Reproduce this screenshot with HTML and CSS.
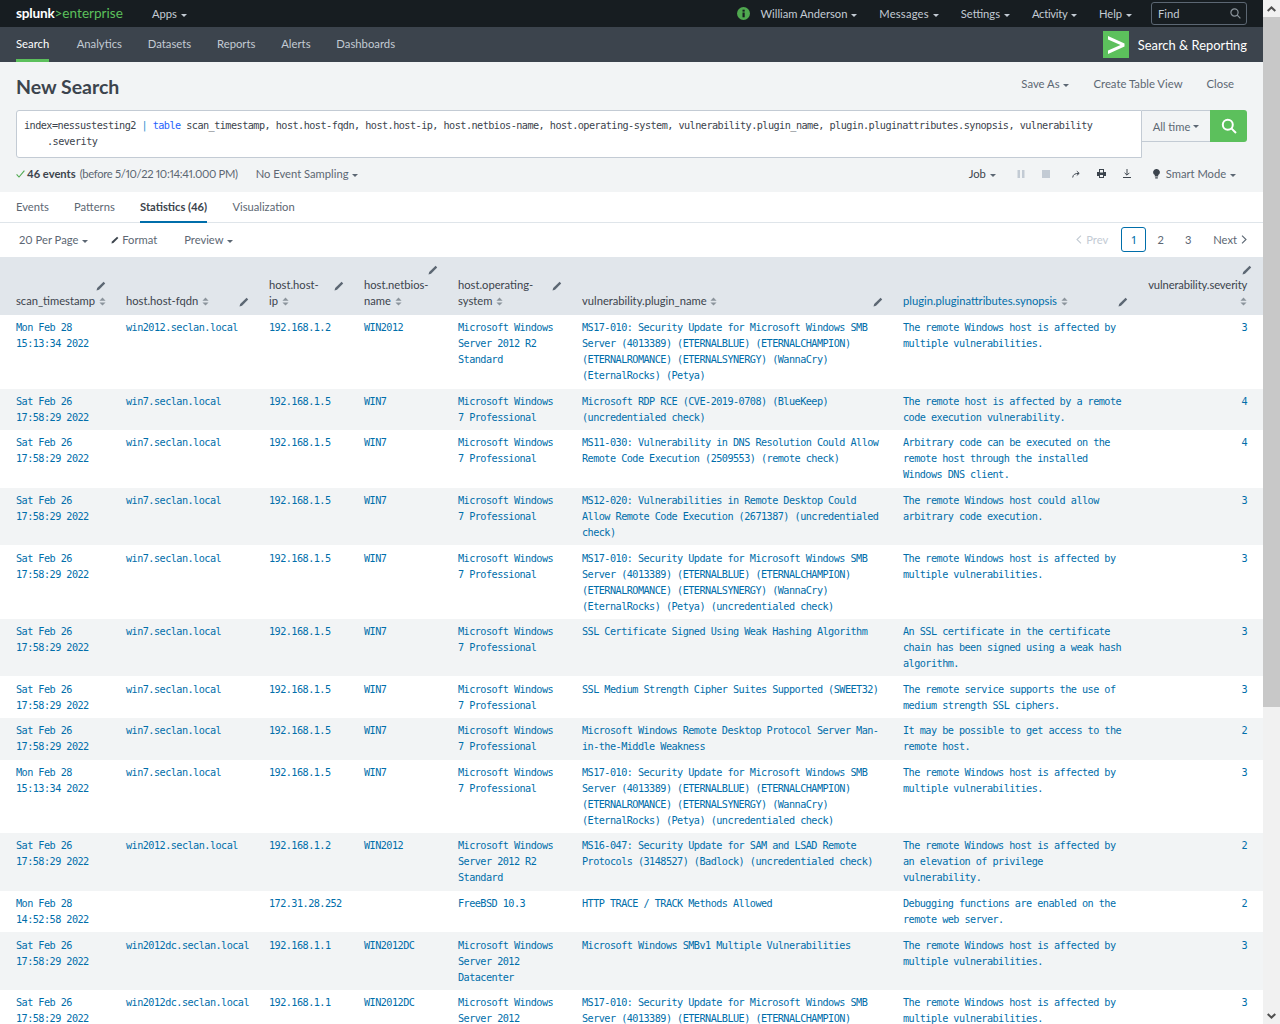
FILE: index.html
```html
<!DOCTYPE html>
<html lang="en">
<head>
<meta charset="utf-8">
<title>New Search</title>
<link rel="stylesheet" href="styles.css">
</head>
<body>
<svg class="defs" width="0" height="0">
  <symbol id="pencil" viewBox="0 0 10 10"><path d="M0.5 9.5 L1.2 7 L7.6 0.8 L9.2 2.4 L3 8.8 Z" fill="currentColor"/></symbol>
  <symbol id="sort" viewBox="0 0 8 10"><path d="M4 0.5 L7.5 4 H0.5 Z M4 9.5 L0.5 6 H7.5 Z" fill="currentColor"/></symbol>
</svg>
<div class="window">
<div class="page">
  <header class="topbar">
    <div class="logo"><span class="logo-white">splunk</span><span class="logo-green">&gt;enterprise</span></div>
    <div class="top-item apps">Apps <i class="caret"></i></div>
    <div class="spacer"></div>
    <svg class="info" width="13" height="13" viewBox="0 0 13 13"><circle cx="6.5" cy="6.5" r="6.5" fill="#4fa84f"/><rect x="5.5" y="5.5" width="2.2" height="4.8" fill="#171d21"/><rect x="5.5" y="2.7" width="2.2" height="1.9" fill="#171d21"/></svg>
    <div class="top-item user">William Anderson <i class="caret"></i></div>
    <div class="top-item wide">Messages <i class="caret"></i></div>
    <div class="top-item">Settings <i class="caret"></i></div>
    <div class="top-item tight">Activity <i class="caret"></i></div>
    <div class="top-item">Help <i class="caret"></i></div>
    <div class="find"><span>Find</span>
      <svg width="11" height="11" viewBox="0 0 11 11" fill="none" stroke="#8b949c" stroke-width="1.2"><circle cx="4.5" cy="4.5" r="3.6"/><path d="M7.2 7.2 L10.4 10.4"/></svg>
    </div>
  </header>
  <nav class="appbar">
    <a class="nav active">Search</a>
    <a class="nav">Analytics</a>
    <a class="nav">Datasets</a>
    <a class="nav">Reports</a>
    <a class="nav">Alerts</a>
    <a class="nav">Dashboards</a>
    <div class="spacer"></div>
    <svg class="applogo" width="26" height="27" viewBox="0 0 26 27"><rect width="26" height="27" fill="#5cc05c"/><path d="M5 5 L21.5 12.5 V15.5 L5 23 V19.4 L17.5 14 L5 8.6 Z" fill="#fff"/></svg>
    <div class="appname">Search &amp; Reporting</div>
  </nav>
  <section class="titlebar">
    <h1>New Search</h1>
    <div class="actions">
      <span class="act">Save As <i class="caret dark"></i></span>
      <span class="act">Create Table View</span>
      <span class="act">Close</span>
    </div>
  </section>
  <section class="searchbar">
    <div class="query"><span>index=nessustesting2 <b class="pipe">|</b> <b class="cmd">table</b> scan_timestamp, host.host-fqdn, host.host-ip, host.netbios-name, host.operating-system, vulnerability.plugin_name, plugin.pluginattributes.synopsis, vulnerability</span><span class="indent">.severity</span></div>
    <div class="timepick">All time <i class="caret dark"></i></div>
    <div class="go"><svg width="16" height="16" viewBox="0 0 16 16" fill="none" stroke="#fff" stroke-width="2"><circle cx="6.8" cy="6.8" r="5"/><path d="M10.4 10.4 L15 15"/></svg></div>
  </section>
  <section class="status">
    <svg class="check" width="9" height="8" viewBox="0 0 9 8" fill="none" stroke="#4fa84f" stroke-width="1.1"><path d="M0.6 4.4 L3 7 L8.4 0.6"/></svg>
    <strong>46 events</strong><span class="before">(before 5/10/22 10:14:41.000 PM)</span>
    <span class="sampling">No Event Sampling <i class="caret dark"></i></span>
    <div class="spacer"></div>
    <span class="job">Job <i class="caret dark"></i></span>
    <svg class="ic pause" width="8" height="8" viewBox="0 0 8 8"><path d="M0.5 0 H3 V8 H0.5 Z M5 0 H7.5 V8 H5 Z" fill="#c3cbd4"/></svg>
    <svg class="ic stop" width="8" height="8" viewBox="0 0 8 8"><rect width="8" height="8" fill="#c3cbd4"/></svg>
    <svg class="ic share" width="8" height="8" viewBox="0 0 8 8" fill="none" stroke="#3c444d" stroke-width="1"><path d="M0.7 7.5 C1 4.5 3 3.4 6.8 3.4"/><path d="M4.8 1.2 L7.2 3.4 L4.8 5.4"/></svg>
    <svg class="ic print" width="9" height="9" viewBox="0 0 9 9"><path d="M2 0 H7 V3 H9 V7 H7 V9 H2 V7 H0 V3 H2 Z M3 1 V3.4 H6 V1 Z M3 6 V8 H6 V6 Z" fill="#3c444d" fill-rule="evenodd"/></svg>
    <svg class="ic export" width="8" height="9" viewBox="0 0 8 9" fill="none" stroke="#3c444d" stroke-width="1"><path d="M4 0 V6 M1.6 3.8 L4 6.2 L6.4 3.8 M0 8.5 H8"/></svg>
    <svg class="bulb" width="7" height="10" viewBox="0 0 7 10"><path d="M3.5 0 A3.2 3.2 0 0 1 5.2 6 V7.4 H1.8 V6 A3.2 3.2 0 0 1 3.5 0 Z M2.2 8.2 H4.8 V9.6 H2.2 Z" fill="#3c444d"/></svg>
    <span class="mode">Smart Mode <i class="caret dark"></i></span>
  </section>
  <main class="results">
    <div class="tabs">
      <a class="tab">Events</a>
      <a class="tab">Patterns</a>
      <a class="tab current">Statistics (46)</a>
      <a class="tab">Visualization</a>
    </div>
    <div class="controls">
      <span class="perpage">20 Per Page <i class="caret dark"></i></span>
      <span class="format"><svg class="pen-sm" width="8" height="8"><use href="#pencil"/></svg>Format</span>
      <span class="preview">Preview <i class="caret dark"></i></span>
      <div class="spacer"></div>
      <span class="prev"><svg width="6" height="9" viewBox="0 0 6 9" fill="none" stroke="currentColor" stroke-width="1.1"><path d="M5 0.6 L1 4.5 L5 8.4"/></svg>Prev</span>
      <span class="pg cur">1</span>
      <span class="pg">2</span>
      <span class="pg">3</span>
      <span class="next">Next<svg width="6" height="9" viewBox="0 0 6 9" fill="none" stroke="currentColor" stroke-width="1.1"><path d="M1 0.6 L5 4.5 L1 8.4"/></svg></span>
    </div>
    <table class="grid">
      <colgroup><col class="c1"><col class="c2"><col class="c3"><col class="c4"><col class="c5"><col class="c6"><col class="c7"><col class="c8"></colgroup>
      <thead>
        <tr>
          <th class="first"><svg class="pen"><use href="#pencil"/></svg><span class="nb">scan_timestamp <svg class="sort"><use href="#sort"/></svg></span></th>
          <th><svg class="pen"><use href="#pencil"/></svg>host.host-fqdn <svg class="sort"><use href="#sort"/></svg></th>
          <th><svg class="pen pen-wide"><use href="#pencil"/></svg>host.host-ip <svg class="sort"><use href="#sort"/></svg></th>
          <th><svg class="pen pen-wide"><use href="#pencil"/></svg>host.netbios-name <svg class="sort"><use href="#sort"/></svg></th>
          <th><svg class="pen"><use href="#pencil"/></svg>host.operating-system <svg class="sort"><use href="#sort"/></svg></th>
          <th><svg class="pen"><use href="#pencil"/></svg>vulnerability.plugin_name <svg class="sort"><use href="#sort"/></svg></th>
          <th class="sorted"><svg class="pen"><use href="#pencil"/></svg>plugin.pluginattributes.synopsis <svg class="sort"><use href="#sort"/></svg></th>
          <th class="last"><svg class="pen"><use href="#pencil"/></svg><span class="rlabel">vulnerability.severity <svg class="sort"><use href="#sort"/></svg></span></th>
        </tr>
      </thead>
      <tbody>
        <tr><td class="first">Mon Feb 28 15:13:34 2022</td><td>win2012.seclan.local</td><td>192.168.1.2</td><td>WIN2012</td><td>Microsoft Windows Server 2012 R2 Standard</td><td>MS17-010: Security Update for Microsoft Windows SMB Server (4013389) (ETERNALBLUE) (ETERNALCHAMPION) (ETERNALROMANCE) (ETERNALSYNERGY) (WannaCry) (EternalRocks) (Petya)</td><td class="syn">The remote Windows host is affected by multiple vulnerabilities.</td><td class="last">3</td></tr>
        <tr><td class="first">Sat Feb 26 17:58:29 2022</td><td>win7.seclan.local</td><td>192.168.1.5</td><td>WIN7</td><td>Microsoft Windows 7 Professional</td><td>Microsoft RDP RCE (CVE-2019-0708) (BlueKeep) (uncredentialed check)</td><td class="syn">The remote host is affected by a remote code execution vulnerability.</td><td class="last">4</td></tr>
        <tr><td class="first">Sat Feb 26 17:58:29 2022</td><td>win7.seclan.local</td><td>192.168.1.5</td><td>WIN7</td><td>Microsoft Windows 7 Professional</td><td>MS11-030: Vulnerability in DNS Resolution Could Allow Remote Code Execution (2509553) (remote check)</td><td class="syn">Arbitrary code can be executed on the remote host through the installed Windows DNS client.</td><td class="last">4</td></tr>
        <tr><td class="first">Sat Feb 26 17:58:29 2022</td><td>win7.seclan.local</td><td>192.168.1.5</td><td>WIN7</td><td>Microsoft Windows 7 Professional</td><td>MS12-020: Vulnerabilities in Remote Desktop Could Allow Remote Code Execution (2671387) (uncredentialed check)</td><td class="syn">The remote Windows host could allow arbitrary code execution.</td><td class="last">3</td></tr>
        <tr><td class="first">Sat Feb 26 17:58:29 2022</td><td>win7.seclan.local</td><td>192.168.1.5</td><td>WIN7</td><td>Microsoft Windows 7 Professional</td><td>MS17-010: Security Update for Microsoft Windows SMB Server (4013389) (ETERNALBLUE) (ETERNALCHAMPION) (ETERNALROMANCE) (ETERNALSYNERGY) (WannaCry) (EternalRocks) (Petya) (uncredentialed check)</td><td class="syn">The remote Windows host is affected by multiple vulnerabilities.</td><td class="last">3</td></tr>
        <tr><td class="first">Sat Feb 26 17:58:29 2022</td><td>win7.seclan.local</td><td>192.168.1.5</td><td>WIN7</td><td>Microsoft Windows 7 Professional</td><td>SSL Certificate Signed Using Weak Hashing Algorithm</td><td class="syn">An SSL certificate in the certificate chain has been signed using a weak hash algorithm.</td><td class="last">3</td></tr>
        <tr><td class="first">Sat Feb 26 17:58:29 2022</td><td>win7.seclan.local</td><td>192.168.1.5</td><td>WIN7</td><td>Microsoft Windows 7 Professional</td><td>SSL Medium Strength Cipher Suites Supported (SWEET32)</td><td class="syn">The remote service supports the use of medium strength SSL ciphers.</td><td class="last">3</td></tr>
        <tr><td class="first">Sat Feb 26 17:58:29 2022</td><td>win7.seclan.local</td><td>192.168.1.5</td><td>WIN7</td><td>Microsoft Windows 7 Professional</td><td>Microsoft Windows Remote Desktop Protocol Server Man-in-the-Middle Weakness</td><td class="syn">It may be possible to get access to the remote host.</td><td class="last">2</td></tr>
        <tr><td class="first">Mon Feb 28 15:13:34 2022</td><td>win7.seclan.local</td><td>192.168.1.5</td><td>WIN7</td><td>Microsoft Windows 7 Professional</td><td>MS17-010: Security Update for Microsoft Windows SMB Server (4013389) (ETERNALBLUE) (ETERNALCHAMPION) (ETERNALROMANCE) (ETERNALSYNERGY) (WannaCry) (EternalRocks) (Petya) (uncredentialed check)</td><td class="syn">The remote Windows host is affected by multiple vulnerabilities.</td><td class="last">3</td></tr>
        <tr><td class="first">Sat Feb 26 17:58:29 2022</td><td>win2012.seclan.local</td><td>192.168.1.2</td><td>WIN2012</td><td>Microsoft Windows Server 2012 R2 Standard</td><td>MS16-047: Security Update for SAM and LSAD Remote Protocols (3148527) (Badlock) (uncredentialed check)</td><td class="syn">The remote Windows host is affected by an elevation of privilege vulnerability.</td><td class="last">2</td></tr>
        <tr><td class="first">Mon Feb 28 14:52:58 2022</td><td></td><td>172.31.28.252</td><td></td><td>FreeBSD 10.3</td><td>HTTP TRACE / TRACK Methods Allowed</td><td class="syn">Debugging functions are enabled on the remote web server.</td><td class="last">2</td></tr>
        <tr><td class="first">Sat Feb 26 17:58:29 2022</td><td>win2012dc.seclan.local</td><td>192.168.1.1</td><td>WIN2012DC</td><td>Microsoft Windows Server 2012 Datacenter</td><td>Microsoft Windows SMBv1 Multiple Vulnerabilities</td><td class="syn">The remote Windows host is affected by multiple vulnerabilities.</td><td class="last">3</td></tr>
        <tr><td class="first">Sat Feb 26 17:58:29 2022</td><td>win2012dc.seclan.local</td><td>192.168.1.1</td><td>WIN2012DC</td><td>Microsoft Windows Server 2012 Datacenter</td><td>MS17-010: Security Update for Microsoft Windows SMB Server (4013389) (ETERNALBLUE) (ETERNALCHAMPION) (ETERNALROMANCE) (ETERNALSYNERGY) (WannaCry) (EternalRocks) (Petya)</td><td class="syn">The remote Windows host is affected by multiple vulnerabilities.</td><td class="last">3</td></tr>
      </tbody>
    </table>
  </main>
</div>
<aside class="scrollbar">
  <div class="sb-btn"><svg width="9" height="6" viewBox="0 0 9 6" fill="none" stroke="#505050" stroke-width="2"><path d="M0.7 5 L4.5 1.4 L8.3 5"/></svg></div>
  <div class="sb-thumb"></div>
  <div class="sb-track"></div>
  <div class="sb-btn"><svg width="9" height="6" viewBox="0 0 9 6" fill="none" stroke="#505050" stroke-width="2"><path d="M0.7 1 L4.5 4.6 L8.3 1"/></svg></div>
</aside>
</div>
</body>
</html>
```

FILE: styles.css
```css
* { box-sizing: border-box; }
html, body { margin: 0; padding: 0; height: 1024px; overflow: hidden; }
body { font-family: "Lato", "Liberation Sans", sans-serif; font-size: 11.2px; color: #3c444d; background: #fff; font-variant-numeric: proportional-nums; }
.defs { display: block; }
.window { display: flex; height: 1024px; overflow: hidden; }
.page { width: 1263px; flex: none; }
.spacer { flex: 1; }
.caret { display: inline-block; width: 0; height: 0; border-left: 3px solid transparent; border-right: 3px solid transparent; border-top: 3.5px solid currentColor; margin-left: 1px; vertical-align: 1px; }
.caret.dark { color: #5c6773; }

.topbar { height: 27px; background: #171d21; display: flex; align-items: center; padding: 0 16px 1px; color: #c3cbd4; }
.logo { font-size: 13.6px; line-height: 26px; width: 136px; }
.logo-white { color: #fff; font-weight: 700; letter-spacing: -0.2px; }
.logo-green { color: #5cc05c; }
.top-item { margin-right: 22px; white-space: nowrap; }
.top-item.user { margin-left: 11px; }
.top-item.wide { letter-spacing: 0.2px; }
.top-item.tight { letter-spacing: -0.25px; }
.find { width: 96px; height: 23px; border: 1px solid #5c6773; border-radius: 3px; display: flex; align-items: center; justify-content: space-between; padding: 0 5px 0 6px; margin-left: -3px; }

.appbar { height: 35px; background: #3c444d; display: flex; align-items: center; padding: 0 16px; font-size: 11.3px; }
.nav { color: #c3cbd4; height: 35px; line-height: 33px; margin-right: 25.8px; border-bottom: 3px solid transparent; }
.nav.active { color: #fff; border-bottom-color: #5cc05c; margin-right: 27.4px; }
.appname { color: #fff; font-size: 12.9px; margin-left: 9px; }

.titlebar { height: 48px; background: #f2f4f5; display: flex; align-items: center; justify-content: space-between; padding: 1px 29px 0 16px; }
h1 { margin: 0; font-size: 19.5px; font-weight: 700; color: #3c444d; }
.actions { display: flex; gap: 24px; color: #5c6773; padding-bottom: 7px; font-size: 11.3px; }

.searchbar { height: 48px; background: #f2f4f5; display: flex; align-items: flex-start; padding: 0 16px; }
.query { width: 1126px; height: 48px; background: #fff; border: 1px solid #c3cbd4; border-radius: 3px 0 0 3px; padding: 6.5px 7px; font-family: "DejaVu Sans Mono", monospace; font-size: 10.2px; letter-spacing: -0.54px; line-height: 16px; color: #3c444d; white-space: nowrap; }
.query span { display: block; }
.query .indent { padding-left: 23px; }
.pipe { font-weight: 400; color: #2f8fd0; }
.cmd { font-weight: 400; color: #2662fc; }
.timepick { width: 68px; height: 32px; border-bottom: 1px solid #c3cbd4; border-top: 1px solid #c3cbd4; color: #5c6773; display: flex; align-items: center; justify-content: center; gap: 2px; }
.go { width: 37px; height: 32px; background: #5cc05c; border-radius: 0 3px 3px 0; display: flex; align-items: center; justify-content: center; }

.status { height: 34px; background: #f2f4f5; display: flex; align-items: center; padding: 0 16px 3px; color: #5c6773; }
.check { margin-right: 2px; }
.status strong { color: #3c444d; font-weight: 700; }
.before { margin-left: 4px; letter-spacing: -0.32px; }
.sampling { margin-left: 18px; }
.job { color: #3c444d; }
.pause { margin-left: 21px; }
.stop { margin-left: 17px; }
.share { margin-left: 22px; }
.print { margin-left: 17px; }
.export { margin-left: 17px; }
.bulb { margin-left: 22px; margin-right: 6px; }
.mode { margin-right: 11px; }

.results { background: #fff; }
.tabs { height: 31px; display: flex; gap: 25.3px; padding: 0 16px; border-bottom: 1px solid #dfe5ea; color: #5c6773; }
.tab { height: 31px; line-height: 30px; }
.tab.current { color: #3c444d; font-weight: 700; border-bottom: 2px solid #006eaa; }

.controls { height: 34px; display: flex; align-items: center; padding: 0 16px 1px 19px; color: #5c6773; }
.format { margin-left: 23px; }
.pen-sm { margin-right: 3px; color: #3c444d; }
.preview { margin-left: 27px; }
.prev { color: #c3cbd4; margin-right: 13px; display: flex; align-items: center; gap: 4px; }
.pg { width: 25px; height: 25px; line-height: 23px; text-align: center; border: 1px solid transparent; border-radius: 3px; margin-right: 2.5px; }
.pg.cur { border-color: #006eaa; color: #006eaa; margin-right: 2px; }
.next { margin-left: 10px; display: flex; align-items: center; gap: 4px; }

.grid { width: 1263px; table-layout: fixed; border-collapse: collapse; border-spacing: 0; }
.c1 { width: 116px; } .c2 { width: 143px; } .c3 { width: 95px; } .c4 { width: 94px; }
.c5 { width: 124px; } .c6 { width: 321px; } .c7 { width: 245px; } .c8 { width: 125px; }
.grid th { background: #e1e6eb; font-weight: 400; text-align: left; vertical-align: bottom; padding: 4px 10px 6px; line-height: 16px; height: 58px; color: #3c444d; }
.grid th.sorted { color: #006eaa; }
.grid th.first, .grid td.first { padding-left: 16px; }
.nb { white-space: nowrap; }
.pen { float: right; width: 10px; height: 10px; margin: 4px 0 2px 4px; color: #5c6773; }
.pen-wide { margin-left: 14px; }
.sort { width: 7px; height: 9px; color: #8b949c; vertical-align: -1px; margin-left: 1px; }
.grid th.last { text-align: right; padding-right: 11px; }
.rlabel { display: block; clear: both; padding-right: 5px; letter-spacing: -0.1px; }
.grid td { vertical-align: top; padding: 5.2px 10px 4.4px; font-family: "DejaVu Sans Mono", monospace; font-size: 10.2px; letter-spacing: -0.54px; line-height: 16px; color: #006eaa; }
.grid td.syn { padding-right: 12px; }
.grid td.last { text-align: right; padding-right: 16px; }
.grid tbody tr:nth-child(even) td { background: #f2f4f5; }

.scrollbar { width: 17px; flex: none; background: #f1f1f1; display: flex; flex-direction: column; }
.sb-btn { height: 17px; flex: none; display: flex; align-items: center; justify-content: center; }
.sb-thumb { height: 690px; flex: none; background: #c8c8c8; }
.sb-track { flex: 1; }
```
